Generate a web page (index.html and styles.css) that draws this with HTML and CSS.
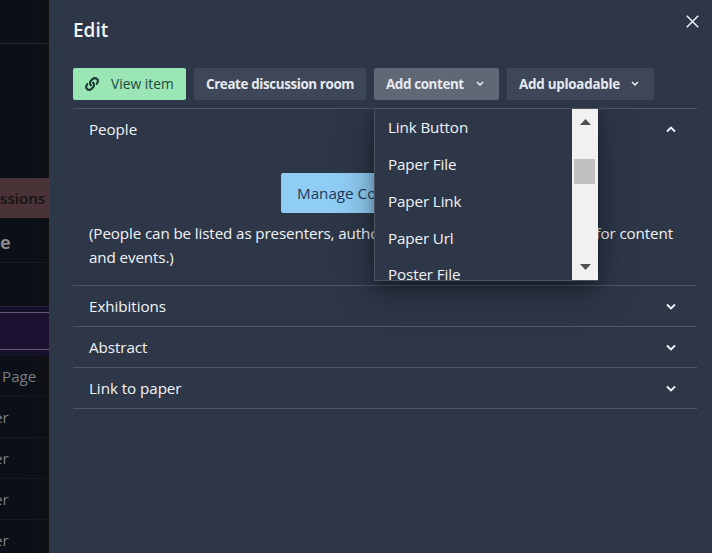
FILE: index.html
```html
<!DOCTYPE html>
<html lang="en">
<head>
<meta charset="utf-8">
<title>Edit</title>
<link rel="stylesheet" href="styles.css">
</head>
<body>
<div class="app">
  <aside class="backdrop">
    <div class="bar"></div>
    <div class="space"></div>
    <div class="sessions"><span>ssions</span></div>
    <div class="heading"><span>e</span></div>
    <div class="blank"></div>
    <div class="selected"></div>
    <div class="row page"><span>Page</span></div>
    <div class="row"><span>er</span></div>
    <div class="row"><span>er</span></div>
    <div class="row"><span>er</span></div>
    <div class="row"><span>er</span></div>
  </aside>
  <main class="drawer">
    <button class="close" aria-label="Close"><svg width="13" height="13" viewBox="0 0 12 12"><path d="M.7.7l10.6 10.6M11.3.7L.7 11.3"/></svg></button>
    <h1><span>Edit</span></h1>
    <div class="toolbar">
      <button class="btn view"><svg class="link" width="14" height="14" viewBox="0 0 512 512"><path d="M326.612 185.391c59.747 59.809 58.927 155.698.36 214.59-.11.12-.24.25-.36.37l-67.2 67.2c-59.27 59.27-155.699 59.262-214.96 0-59.27-59.26-59.27-155.7 0-214.96l37.106-37.106c9.84-9.84 26.786-3.3 27.294 10.606.648 17.722 3.826 35.527 9.69 52.721 1.986 5.822.567 12.262-3.783 16.612l-13.087 13.087c-28.026 28.026-28.905 73.66-1.155 101.96 28.024 28.579 74.086 28.749 102.325.51l67.2-67.19c28.191-28.191 28.073-73.757 0-101.83-3.701-3.694-7.429-6.564-10.341-8.569a16.037 16.037 0 0 1-6.947-12.606c-.396-10.567 3.348-21.456 11.698-29.806l21.054-21.055c5.521-5.521 14.182-6.199 20.584-1.731a152.482 152.482 0 0 1 20.522 17.197zM467.547 44.449c-59.261-59.262-155.69-59.27-214.96 0l-67.2 67.2c-.12.12-.25.25-.36.37-58.566 58.892-59.387 154.781.36 214.59a152.454 152.454 0 0 0 20.521 17.196c6.402 4.468 15.064 3.789 20.584-1.731l21.054-21.055c8.35-8.35 12.094-19.239 11.698-29.806a16.037 16.037 0 0 0-6.947-12.606c-2.912-2.005-6.64-4.875-10.341-8.569-28.073-28.073-28.191-73.639 0-101.83l67.2-67.19c28.239-28.239 74.3-28.069 102.325.51 27.75 28.3 26.872 73.934-1.155 101.96l-13.087 13.087c-4.35 4.35-5.769 10.79-3.783 16.612 5.864 17.194 9.042 34.999 9.69 52.721.509 13.906 17.454 20.446 27.294 10.606l37.106-37.106c59.271-59.259 59.271-155.699.001-214.959z"/></svg><span>View item</span></button>
      <button class="btn create"><span>Create discussion room</span></button>
      <div class="menu-wrap">
        <button class="btn content"><span>Add content</span><svg class="chev" width="8" height="6" viewBox="0 0 8 6"><path d="M1 1l3 3 3-3"/></svg></button>
        <div class="menu">
          <ul>
            <li>Link Button</li>
            <li>Paper File</li>
            <li>Paper Link</li>
            <li>Paper Url</li>
            <li>Poster File</li>
          </ul>
          <div class="scrollbar">
            <svg width="11" height="6" viewBox="0 0 11 6"><path d="M0 6L5.5 0 11 6z"/></svg>
            <div class="thumb"></div>
            <svg class="down" width="11" height="6" viewBox="0 0 11 6"><path d="M0 0L5.5 6 11 0z"/></svg>
          </div>
        </div>
      </div>
      <button class="btn upload"><span>Add uploadable</span><svg class="chev" width="8" height="6" viewBox="0 0 8 6"><path d="M1 1l3 3 3-3"/></svg></button>
    </div>
    <div class="accordion">
      <section>
        <div class="head"><span>People</span><svg width="10" height="7" viewBox="0 0 10 7"><path d="M1 5.5l4-4 4 4"/></svg></div>
        <div class="panel">
          <button class="manage"><span>Manage Contributors</span></button>
          <p><span class="line"><span>(People can be listed as presenters, authors,</span><span>for content</span></span>
          <span class="line"><span>and events.)</span></span></p>
        </div>
      </section>
      <section><div class="head"><span>Exhibitions</span><svg width="10" height="7" viewBox="0 0 10 7"><path d="M1 1.5l4 4 4-4"/></svg></div></section>
      <section><div class="head"><span>Abstract</span><svg width="10" height="7" viewBox="0 0 10 7"><path d="M1 1.5l4 4 4-4"/></svg></div></section>
      <section><div class="head"><span>Link to paper</span><svg width="10" height="7" viewBox="0 0 10 7"><path d="M1 1.5l4 4 4-4"/></svg></div></section>
    </div>
  </main>
</div>
</body>
</html>
```
FILE: styles.css
```css
* { box-sizing: border-box; }
body { margin: 0; font: 15.2px/24px "Open Sans", "Noto Sans", sans-serif; color: #f2f4f7; background: #2d3748; }
button { font: inherit; border: 0; padding: 0; margin: 0; color: inherit; background: none; }
span { white-space: nowrap; }
svg { display: block; flex: none; }
.app { display: flex; width: 712px; height: 553px; overflow: hidden; }

.backdrop { width: 49px; flex: none; background: linear-gradient(90deg, #0b0f18 60%, #101114); color: #7e7e80; overflow: hidden; }
.bar { height: 44px; border-bottom: 1px solid #24272d; }
.space { height: 134px; }
.sessions { height: 40px; background: #493337; color: #171216; font-weight: 600; line-height: 41px; }
.heading { height: 45px; border-bottom: 1px solid #171b22; font-size: 18px; font-weight: 700; line-height: 49px; color: #89898a; }
.blank { height: 44px; border-bottom: 1px solid #282046; }
.selected { height: 49px; padding-top: 5px; background: #15112a; }
.selected::before { content: ""; display: block; height: 36px; background: #1b1232; border: solid #625e70; border-width: 1px 0; }
.row { height: 41px; line-height: 41px; border-bottom: 1px solid #171b21; text-indent: -6px; }
.row.page { text-indent: 2px; }

.drawer { flex: 1; position: relative; padding: 16px 15px 0 24px; background: #2d3748; box-shadow: inset 1px 0 #303b48; }
.close { position: absolute; left: 637px; top: 15px; }
.close svg { fill: none; stroke: #eef1f5; stroke-width: 1.4; }
h1 { margin: 0; height: 52px; font-size: 19px; font-weight: 600; line-height: 28px; }
.toolbar { display: flex; gap: 8px; height: 40px; }
.btn { display: flex; align-items: center; height: 32px; padding: 0 12px; border-radius: 2px; background: #3e4758; color: #e6eaf0; font-size: 13.4px; font-weight: 700; letter-spacing: -.38px; }
.view { width: 113px; background: #9ae6b4; color: #23493f; font-weight: 500; font-size: 13.8px; letter-spacing: 0; }
.link { margin-right: 12px; fill: #1c3b36; }
.create { width: 172px; }
.content { width: 125px; background: #606876; }
.upload { width: 147px; letter-spacing: -.25px; }
.btn .chev { margin-left: auto; margin-right: 3px; fill: none; stroke: #f1f3f6; stroke-width: 1.5; }
.menu-wrap { position: relative; }
.menu { position: absolute; z-index: 1; left: 0; top: 41px; width: 224px; height: 172px; display: flex; background: #2d3748; border: 1px solid #4c5565; border-width: 0 0 1px 1px; overflow: hidden; }
.menu-wrap::after { content: ""; position: absolute; left: 0; top: 40px; width: 224px; height: 173px; box-shadow: 0 5px 10px rgba(0,0,0,.22), 0 10px 36px rgba(0,0,0,.38); clip-path: inset(0 -60px -60px -60px); }
ul { list-style: none; margin: 0; padding: 0; width: 197px; height: 171px; overflow: hidden; }
li { height: 37px; padding: 6px 0 0 13px; letter-spacing: -.12px; }
li:last-child { padding-top: 5px; }
.scrollbar { width: 26px; background: #f1f1f1; padding-top: 10px; display: flex; flex-direction: column; align-items: center; }
.scrollbar svg { fill: #505050; }
.thumb { width: 21px; height: 25px; margin: 34px 1px 0 0; background: #c1c1c1; }
.scrollbar .down { margin-top: auto; margin-bottom: 10px; }

.accordion { border-bottom: 1px solid #4e5768; }
section { border-top: 1px solid #4e5768; }
.head { display: flex; justify-content: space-between; align-items: center; height: 40px; padding: 0 21px 0 16px; letter-spacing: -.06px; }
.head svg { fill: none; stroke: #f4f6f9; stroke-width: 1.8; }
.panel { height: 136px; padding: 24px 16px 0; }
.manage { display: block; width: 208px; height: 40px; margin: 0 auto; padding-left: 16px; background: #90cdf4; color: #1c3a5c; text-align: left; border-radius: 2px; font-weight: 500; }
p { margin: 8px 0 0; letter-spacing: -.12px; }
.line { display: flex; justify-content: space-between; padding-right: 8px; }
```
